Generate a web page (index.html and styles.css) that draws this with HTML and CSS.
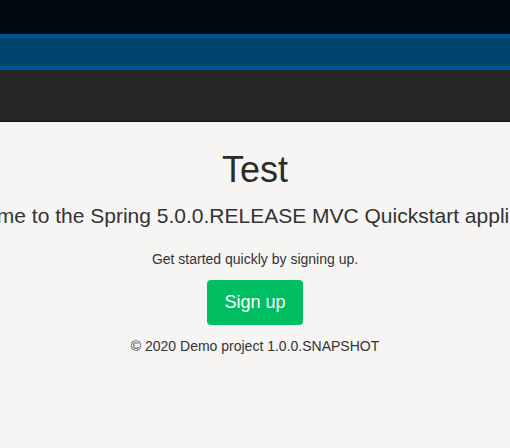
FILE: index.html
```html
<!DOCTYPE html>
<html>
<head>
<meta charset="utf-8">
<link rel="stylesheet" href="styles.css">
</head>
<body>
<div class="topbar"></div>
<div class="bluebar"></div>
<div class="navbar"></div>
<main class="content">
  <h1 class="title">Test</h1>
  <div class="lead-wrap"><p class="lead">Welcome to the Spring 5.0.0.RELEASE MVC Quickstart application!</p></div>
  <p class="info">Get started quickly by signing up.</p>
  <a class="btn" href="#">Sign up</a>
  <p class="footer">© 2020 Demo project 1.0.0.SNAPSHOT</p>
</main>
</body>
</html>
```
FILE: styles.css
```css
html, body {
  margin: 0;
  padding: 0;
  height: 100%;
  overflow: hidden;
}
body {
  background: #f6f5f3;
  font-family: "Liberation Sans", Arial, sans-serif;
  color: #333;
}
.topbar {
  height: 34px;
  background: #000a12;
}
.bluebar {
  height: 28px;
  background: #00456e;
  border-top: 4px solid #005494;
  border-bottom: 4px solid #005494;
}
.navbar {
  height: 51px;
  background: #262626;
  border-bottom: 1px solid #111;
}
.content {
  display: flex;
  flex-direction: column;
  align-items: center;
}
.title {
  margin: 28px 0 0;
  font-size: 36px;
  font-weight: 400;
  line-height: 40px;
  color: #2b2b2b;
}
.lead-wrap {
  width: 100%;
  display: flex;
  justify-content: center;
}
.lead {
  flex: none;
  white-space: nowrap;
  margin: 12px 0 0;
  font-size: 21px;
  line-height: 28px;
  color: #333;
}
.info {
  margin: 19px 0 0;
  font-size: 14px;
  line-height: 20px;
  color: #333;
}
.btn {
  margin-top: 11px;
  display: block;
  background: #00bf63;
  color: #fff;
  text-decoration: none;
  font-size: 18px;
  line-height: 24px;
  padding: 10px 17px 11px;
  border-radius: 4px;
}
.footer {
  margin: 11px 0 0;
  font-size: 14px;
  line-height: 20px;
  color: #333;
}
```
